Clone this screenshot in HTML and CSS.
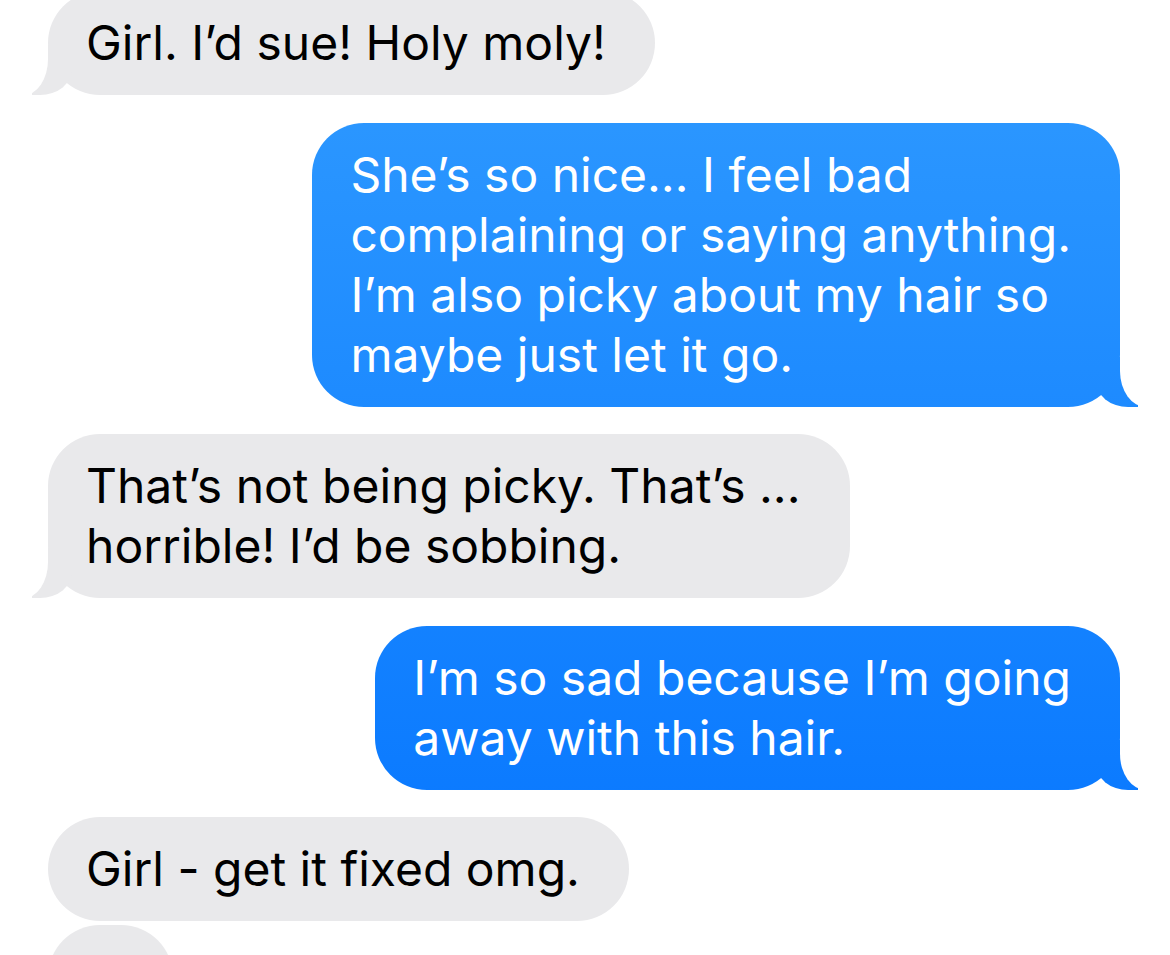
FILE: index.html
```html
<!DOCTYPE html>
<html lang="en">

<head>
    <meta charset="UTF-8">
    <meta name="viewport" content="width=device-width, initial-scale=1.0">
    <title>Messages</title>
    <link rel="stylesheet" href="styles.css">
</head>

<body>
    <div class="thread">
        <div class="group them">
            <div class="bubble tail">Girl. I’d sue! Holy moly!</div>
        </div>
        <div class="group me">
            <div class="bubble tail">She’s so nice… I feel bad<br>complaining or saying anything.<br>I’m also picky about my hair so<br>maybe just let it go.</div>
        </div>
        <div class="group them">
            <div class="bubble tail">That’s not being picky. That’s ...<br>horrible! I’d be sobbing.</div>
        </div>
        <div class="group me">
            <div class="bubble tail">I’m so sad because I’m going<br>away with this hair.</div>
        </div>
        <div class="group them">
            <div class="bubble">Girl - get it fixed omg.</div>
            <div class="bubble tail short"></div>
        </div>
    </div>
</body>

</html>
```

FILE: styles.css
```css
body {
    margin: 0;
    padding: 0;
    background-color: #fff;
    font-family: Inter, "Noto Sans", sans-serif;
    overflow: hidden;
}

/* ------------------thread------------------- */
.thread {
    display: flex;
    flex-direction: column;
    gap: 27.5px;
    margin-top: -9px;
    padding: 0 50px 0 48px;
}

.group {
    display: flex;
    flex-direction: column;
    gap: 4px;
}

.them {
    align-items: flex-start;
}

.me {
    align-items: flex-end;
}

/* ------------------bubbles------------------- */
.bubble {
    position: relative;
    padding: 22px 49px 22px 38px;
    border-radius: 52px;
    font-size: 48px;
    line-height: 60px;
    letter-spacing: 0;
    white-space: nowrap;
}

.them .bubble {
    background-color: #e9e9eb;
    color: #000;
}

.me .bubble {
    background: linear-gradient(#309bff, #0474ff) fixed;
    color: #fff;
}

.short {
    width: 38px;
    height: 60px;
}

.tail::before,
.tail::after {
    content: "";
    position: absolute;
    bottom: 0;
}

.them .tail::before {
    left: -16px;
    width: 40px;
    height: 50px;
    background-color: #e9e9eb;
    border-bottom-right-radius: 32px 26px;
}

.them .tail::after {
    left: -40px;
    width: 40px;
    height: 60px;
    background-color: #fff;
    border-bottom-right-radius: 24px 36px;
}

.me .tail::before {
    right: -18px;
    width: 42px;
    height: 50px;
    background: linear-gradient(#309bff, #0474ff) fixed;
    border-bottom-left-radius: 32px 26px;
}

.me .tail::after {
    right: -40px;
    width: 40px;
    height: 60px;
    background-color: #fff;
    border-bottom-left-radius: 26px 36px;
}
```
